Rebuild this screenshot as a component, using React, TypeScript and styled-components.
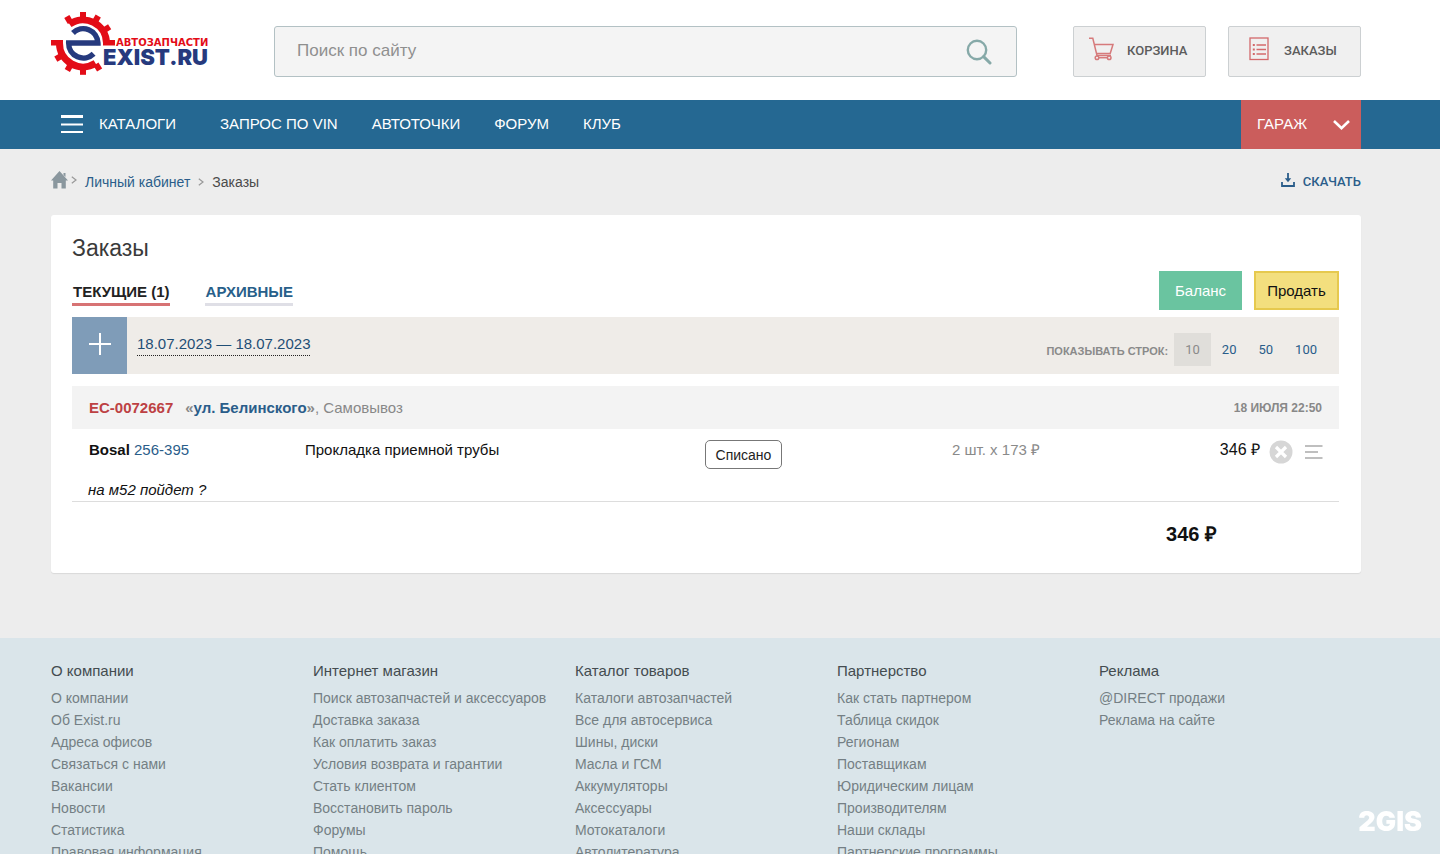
import React from "react";
import styled, { createGlobalStyle, css } from "styled-components";

const GlobalStyle = createGlobalStyle`
  *, *::before, *::after { box-sizing: border-box; }
  body {
    margin: 0;
    background: #ededed;
    color: #111;
    font-family: "Liberation Sans", Arial, sans-serif;
    font-size: 15px;
    line-height: 20px;
  }
  a { text-decoration: none; color: #2a5d8a; }
  button { font-family: inherit; cursor: pointer; }
  h1, h2, ul { margin: 0; padding: 0; font-weight: 400; }
  ul { list-style: none; }
  svg { display: block; flex: none; }
`;

const gutters = css`
  padding-left: 51px;
  padding-right: 79px;
`;

const Header = styled.header`
  ${gutters}
  display: flex;
  align-items: flex-start;
  height: 100px;
  background: #fff;
`;

const LogoLink = styled.a`
  display: block;
  width: 223px;
  padding-top: 10px;
`;

const LogoSvg = styled.svg`
  overflow: visible;
`;

const SearchForm = styled.form`
  display: flex;
  align-items: center;
  flex: 1;
  height: 51px;
  margin-top: 26px;
  margin-right: 56px;
  padding: 0 24px 0 22px;
  background: #f4f4f4;
  border: 1px solid #b3c1c4;
  border-radius: 3px;
`;

const SearchInput = styled.input`
  flex: 1;
  min-width: 0;
  height: 48px;
  padding: 0 0 2px;
  border: 0;
  outline: 0;
  background: transparent;
  font-family: inherit;
  font-size: 17px;
  color: #333;
  &::placeholder { color: #8f8f8f; opacity: 1; }
`;

const IconButton = styled.button`
  display: flex;
  padding: 0;
  border: 0;
  background: none;
`;

const HeaderLinks = styled.div`
  display: flex;
  gap: 22px;
  margin-top: 26px;
`;

const HeaderLink = styled.a<{ $inset: number; $gap: number }>`
  display: flex;
  align-items: center;
  gap: ${(p) => p.$gap}px;
  width: 133px;
  height: 51px;
  padding: 0 0 2px ${(p) => p.$inset}px;
  background: #f0f0f0;
  border: 1px solid #ccd0d2;
  border-radius: 2px;
  color: #5c5c5c;
  font-family: Roboto, sans-serif;
  font-size: 13px;
  font-weight: 500;
  svg { margin-bottom: 4px; }
`;

const Nav = styled.nav`
  ${gutters}
  display: flex;
  align-items: stretch;
  height: 49px;
  background: #256892;
  font-size: 15px;
`;

const CatalogButton = styled.button`
  display: flex;
  align-items: center;
  gap: 16px;
  margin-right: 44px;
  padding: 0 0 2px 10px;
  border: 0;
  background: none;
  color: #fff;
  font-size: 15px;
`;

const NavLinks = styled.div`
  display: flex;
  align-items: center;
  gap: 34px;
  flex: 1;
  padding-bottom: 2px;
`;

const NavLink = styled.a`
  color: #fff;
`;

const GarageButton = styled.button`
  display: flex;
  align-items: center;
  justify-content: space-between;
  width: 120px;
  padding: 0 11px 2px 16px;
  border: 0;
  background: #cb5d5c;
  color: #fff;
  font-size: 15px;
  svg { margin-top: 2px; }
`;

const Main = styled.main`
  ${gutters}
  padding-bottom: 65px;
`;

const TopRow = styled.div`
  display: flex;
  align-items: center;
  justify-content: space-between;
  height: 66px;
  font-size: 14px;
`;

const Crumbs = styled.nav`
  display: flex;
  align-items: center;
  gap: 8px;
  color: #4a4a4a;
`;

const HomeLink = styled.a`
  display: flex;
  align-items: center;
  gap: 3px;
  padding-bottom: 4px;
`;

const Download = styled.a`
  display: flex;
  align-items: center;
  gap: 8px;
  font-family: Roboto, sans-serif;
  font-size: 13px;
  font-weight: 500;
  svg { margin-bottom: 4px; }
`;

const Card = styled.section`
  padding: 20px 22px 22px 21px;
  background: #fff;
  border-radius: 3px;
  box-shadow: 0 1px 1px #d9d9d9;
`;

const Title = styled.h1`
  font-size: 23px;
  line-height: 26px;
  color: #3a3a3a;
`;

const TabRow = styled.div`
  display: flex;
  align-items: flex-end;
  justify-content: space-between;
  padding-bottom: 7px;
  margin-top: 10px;
`;

const Tabs = styled.div`
  display: flex;
  gap: 35px;
  padding-bottom: 4px;
`;

const Tab = styled.a<{ $active?: boolean }>`
  padding: 0 0 1px 1px;
  border-bottom: 3px solid ${(p) => (p.$active ? "#d77374" : "#dfdfe6")};
  color: ${(p) => (p.$active ? "#222" : "#285f8a")};
  font-size: 15px;
  font-weight: 700;
`;

const Actions = styled.div`
  display: flex;
  gap: 12px;
`;

const ActionButton = styled.button<{ $kind: "balance" | "sell" }>`
  height: 39px;
  padding: 0 10px 1px;
  border: 2px solid ${(p) => (p.$kind === "sell" ? "#e6c94e" : "#6ac4a0")};
  background: ${(p) => (p.$kind === "sell" ? "#f3df7e" : "#6ac4a0")};
  color: ${(p) => (p.$kind === "sell" ? "#111" : "#fff")};
  width: ${(p) => (p.$kind === "sell" ? 85 : 83)}px;
  font-size: 15px;
`;

const FilterBar = styled.div`
  display: flex;
  align-items: center;
  height: 57px;
  margin-bottom: 12px;
  background: #efece8;
`;

const AddButton = styled.button`
  display: flex;
  align-items: center;
  justify-content: center;
  width: 55px;
  height: 57px;
  padding: 0 0 4px;
  border: 0;
  background: #7f9cb8;
`;

const DateRange = styled.button`
  margin: 0 auto 2px 10px;
  padding: 0 0 1px;
  border: 0;
  border-bottom: 1px dotted #222;
  background: none;
  color: #1f4e75;
  font-size: 15px;
  line-height: 20px;
`;

const PageSizes = styled.div`
  display: flex;
  align-items: center;
  padding: 7px 11px 0 0;
`;

const PageSizeLabel = styled.span`
  margin-right: 6px;
  padding-top: 4px;
  color: #8a8a8a;
  font-size: 11px;
  font-weight: 700;
`;

const PageSize = styled.button<{ $active?: boolean }>`
  height: 33px;
  padding: 0 11px;
  border: 0;
  background: ${(p) => (p.$active ? "#e0deda" : "none")};
  color: ${(p) => (p.$active ? "#8a8a8a" : "#2a5d8a")};
  font-family: Roboto, sans-serif;
  font-size: 13px;
`;

const OrderTable = styled.table`
  width: 100%;
  border-collapse: collapse;
  table-layout: fixed;
`;

const Col = styled.col<{ $width?: string }>`
  width: ${(p) => p.$width ?? "auto"};
`;

const OrderHead = styled.th<{ $right?: boolean }>`
  height: 43px;
  padding: 0 17px;
  background: #f3f3f3;
  color: #888;
  font-size: ${(p) => (p.$right ? 12 : 15)}px;
  font-weight: ${(p) => (p.$right ? 700 : 400)};
  text-align: ${(p) => (p.$right ? "right" : "left")};
`;

const OrderNumber = styled.a`
  margin-right: 12px;
  color: #bd4143;
  font-weight: 700;
`;

const Bold = styled.b<{ $blue?: boolean }>`
  color: ${(p) => (p.$blue ? "#2a5d8a" : "#111")};
`;

const Cell = styled.td<{ $right?: boolean; $muted?: boolean; $inset?: boolean; $large?: boolean }>`
  height: 49px;
  padding: 11px 0 0 ${(p) => (p.$inset ? 17 : 0)}px;
  vertical-align: top;
  text-align: ${(p) => (p.$right ? "right" : "left")};
  color: ${(p) => (p.$muted ? "#8a8a8a" : "#111")};
  font-size: ${(p) => (p.$large ? 16 : 15)}px;
`;

const Status = styled.button`
  height: 29px;
  width: 77px;
  padding: 0;
  border: 1px solid #777;
  border-radius: 5px;
  background: #fff;
  color: #222;
  font-size: 14px;
`;

const RowActions = styled.div`
  display: flex;
  align-items: center;
  gap: 12px;
  padding-left: 9px;
`;

const NoteCell = styled.td`
  padding: 2px 0 1px 16px;
  border-bottom: 1px solid #ddd;
  font-style: italic;
`;

const TotalCell = styled.td`
  padding: 20px 122px 5px 0;
  font-size: 20px;
  line-height: 24px;
  font-weight: 700;
  text-align: right;
`;

const Footer = styled.footer`
  ${gutters}
  display: grid;
  grid-template-columns: repeat(5, 1fr);
  padding-top: 22px;
  padding-bottom: 22px;
  background: #dae5ea;
`;

const FooterTitle = styled.h2`
  margin-bottom: 5px;
  color: #444c50;
  font-size: 15px;
  line-height: 22px;
`;

const FooterLink = styled.a`
  display: block;
  color: #747f84;
  font-size: 14px;
  line-height: 22px;
  white-space: nowrap;
`;

const Watermark = styled.div`
  position: fixed;
  right: 18px;
  bottom: 16px;
  color: #fff;
  font-family: Inter, sans-serif;
  font-size: 27px;
  line-height: 32px;
  font-weight: 900;
`;

const teeth = [-31, 0, 29, 58, 148, 180, 210, 240];

function Logo() {
  return (
    <LogoSvg width="160" height="68" viewBox="50 10 160 68" role="img" aria-label="Exist.ru автозапчасти">
      <g fill="none" stroke="#e30c17">
        <path d="M68.500 24.200A23.500 23.500 0 0 1 105.500 43" strokeWidth="7" />
        <path d="M58.500 43A23.500 23.500 0 0 0 94.500 63.300" strokeWidth="7" />
        {teeth.map((angle) => (
          <path key={angle} d="M82 19V12" strokeWidth="6" transform={`rotate(${angle} 82 43.4)`} />
        ))}
        <path d="M102 42.800H114M50 42.800H62" strokeWidth="5.4" />
      </g>
      <path
        d="M72 33A14.600 14.600 0 0 1 96.900 42.900H67.700A14.600 14.600 0 0 0 92.600 53.700"
        fill="none"
        stroke="#263a7e"
        strokeWidth="5.500"
      />
      <text x="102" y="65" fill="#263a7e" fontFamily="Inter, sans-serif" fontWeight="900" fontSize="22">
        EXIST.RU
      </text>
      <text x="115" y="46" fill="#e30c17" fontFamily="DejaVu Sans, sans-serif" fontWeight="700" fontSize="10">
        АВТОЗАПЧАСТИ
      </text>
    </LogoSvg>
  );
}

const SearchIcon = () => (
  <svg width="26" height="26" viewBox="0 0 26 26" fill="none" stroke="#86a9a8" strokeWidth="2.4">
    <circle cx="11" cy="11" r="9.200" />
    <path d="M17.600 17.600L24 24" strokeWidth="3" strokeLinecap="round" />
  </svg>
);

const CartIcon = () => (
  <svg width="26" height="24" viewBox="0 0 26 24" fill="none" stroke="#d67a7b" strokeWidth="1.500">
    <path d="M0 1.200H3.800L8 18.500H22M5.600 7.500H24L21.200 16.500H7.600" />
    <circle cx="8" cy="20.700" r="1.800" />
    <circle cx="20.200" cy="20.700" r="1.800" />
    <path d="M9.800 20.700H18.400" />
  </svg>
);

const ListIcon = () => (
  <svg width="20" height="24" viewBox="0 0 20 24" fill="none" stroke="#d3696b" strokeWidth="1.300">
    <rect x="1" y="1" width="18" height="21.500" />
    <path d="M7.500 8H17M7.500 12.500H17M7.500 17H17" />
    <path d="M3.800 8H5.800M3.800 12.500H5.800M3.800 17H5.800" strokeWidth="2" />
  </svg>
);

const MenuIcon = () => (
  <svg width="22" height="20" viewBox="0 0 22 20" fill="#fff">
    <path d="M0 1H22V4H0zM0 9.500H22V11.500H0zM0 17H22V19H0z" />
  </svg>
);

const ChevronDown = () => (
  <svg width="17" height="10" viewBox="0 0 17 10" fill="none" stroke="#fff" strokeWidth="2.600">
    <path d="M1 1L8.500 8.200L16 1" />
  </svg>
);

const HomeIcon = () => (
  <svg width="17" height="18" viewBox="0 0 17 18" fill="#8a979e">
    <path d="M8.500 0L17 9.500H14.800V17.500H10.500V12H6.500V17.500H2.200V9.500H0zM12.500 2H14.500V6L12.500 4z" />
  </svg>
);

const ChevronRight = () => (
  <svg width="6" height="8" viewBox="0 0 6 8" fill="none" stroke="#999" strokeWidth="1.200">
    <path d="M.8.800L5 4L.8 7.200" />
  </svg>
);

const DownloadIcon = () => (
  <svg width="14" height="14" viewBox="0 0 14 14" fill="none" stroke="#2a5d8a" strokeWidth="1.800">
    <path d="M1 9V13H13V9" />
    <path d="M7 0V7" />
    <path d="M3.800 5.200H10.200L7 9.200z" fill="#2a5d8a" stroke="none" />
  </svg>
);

const PlusIcon = () => (
  <svg width="22" height="22" viewBox="0 0 22 22" stroke="#fff" strokeWidth="2">
    <path d="M11 0V22M0 11H22" />
  </svg>
);

const CancelIcon = () => (
  <svg width="24" height="24" viewBox="0 0 24 24">
    <circle cx="12" cy="12" r="11.500" fill="#d6d6d6" />
    <path d="M7 7L17 17M17 7L7 17" stroke="#fff" strokeWidth="3.200" />
  </svg>
);

const LinesIcon = () => (
  <svg width="18" height="14" viewBox="0 0 18 14" fill="none" stroke="#aaa" strokeWidth="1.600">
    <path d="M0 1H17.500M0 7H13M0 13H17.500" />
  </svg>
);

const footerColumns = [
  {
    title: "О компании",
    links: ["О компании", "Об Exist.ru", "Адреса офисов", "Связаться с нами", "Вакансии", "Новости", "Статистика", "Правовая информация"],
  },
  {
    title: "Интернет магазин",
    links: ["Поиск автозапчастей и аксессуаров", "Доставка заказа", "Как оплатить заказ", "Условия возврата и гарантии", "Стать клиентом", "Восстановить пароль", "Форумы", "Помощь"],
  },
  {
    title: "Каталог товаров",
    links: ["Каталоги автозапчастей", "Все для автосервиса", "Шины, диски", "Масла и ГСМ", "Аккумуляторы", "Аксессуары", "Мотокаталоги", "Автолитература"],
  },
  {
    title: "Партнерство",
    links: ["Как стать партнером", "Таблица скидок", "Регионам", "Поставщикам", "Юридическим лицам", "Производителям", "Наши склады", "Партнерские программы"],
  },
  { title: "Реклама", links: ["@DIRECT продажи", "Реклама на сайте"] },
];

export default function App() {
  return (
    <>
      <GlobalStyle />
      <Header>
        <LogoLink href="#">
          <Logo />
        </LogoLink>
        <SearchForm role="search">
          <SearchInput type="search" aria-label="Поиск по сайту" placeholder="Поиск по сайту" />
          <IconButton type="submit" aria-label="Найти">
            <SearchIcon />
          </IconButton>
        </SearchForm>
        <HeaderLinks>
          <HeaderLink href="#" $inset={15} $gap={12}>
            <CartIcon />
            КОРЗИНА
          </HeaderLink>
          <HeaderLink href="#" $inset={20} $gap={15}>
            <ListIcon />
            ЗАКАЗЫ
          </HeaderLink>
        </HeaderLinks>
      </Header>
      <Nav>
        <CatalogButton type="button">
          <MenuIcon />
          КАТАЛОГИ
        </CatalogButton>
        <NavLinks>
          {["ЗАПРОС ПО VIN", "АВТОТОЧКИ", "ФОРУМ", "КЛУБ"].map((label) => (
            <NavLink key={label} href="#">{label}</NavLink>
          ))}
        </NavLinks>
        <GarageButton type="button">
          ГАРАЖ
          <ChevronDown />
        </GarageButton>
      </Nav>
      <Main>
        <TopRow>
          <Crumbs aria-label="Навигация">
            <HomeLink href="#" aria-label="Главная">
              <HomeIcon />
              <ChevronRight />
            </HomeLink>
            <a href="#">Личный кабинет</a>
            <ChevronRight />
            <span>Заказы</span>
          </Crumbs>
          <Download href="#">
            <DownloadIcon />
            СКАЧАТЬ
          </Download>
        </TopRow>
        <Card>
          <Title>Заказы</Title>
          <TabRow>
            <Tabs>
              <Tab href="#" $active>ТЕКУЩИЕ (1)</Tab>
              <Tab href="#">АРХИВНЫЕ</Tab>
            </Tabs>
            <Actions>
              <ActionButton type="button" $kind="balance">Баланс</ActionButton>
              <ActionButton type="button" $kind="sell">Продать</ActionButton>
            </Actions>
          </TabRow>
          <FilterBar>
            <AddButton type="button" aria-label="Добавить">
              <PlusIcon />
            </AddButton>
            <DateRange type="button">18.07.2023 — 18.07.2023</DateRange>
            <PageSizes>
              <PageSizeLabel>ПОКАЗЫВАТЬ СТРОК:</PageSizeLabel>
              {[10, 20, 50, 100].map((size) => (
                <PageSize key={size} type="button" $active={size === 10}>{size}</PageSize>
              ))}
            </PageSizes>
          </FilterBar>
          <OrderTable>
            <colgroup>
              <Col $width="233px" />
              <Col />
              <Col $width="110px" />
              <Col $width="258px" />
              <Col $width="220px" />
              <Col $width="79px" />
            </colgroup>
            <thead>
              <tr>
                <OrderHead colSpan={4}>
                  <OrderNumber href="#">ЕС-0072667</OrderNumber>
                  <b>«</b>
                  <Bold $blue>ул. Белинского</Bold>
                  <b>»</b>, Самовывоз
                </OrderHead>
                <OrderHead colSpan={2} $right>18 ИЮЛЯ 22:50</OrderHead>
              </tr>
            </thead>
            <tbody>
              <tr>
                <Cell $inset>
                  <Bold>Bosal</Bold> <a href="#">256-395</a>
                </Cell>
                <Cell>Прокладка приемной трубы</Cell>
                <Cell $right>
                  <Status type="button">Списано</Status>
                </Cell>
                <Cell $right $muted>2 шт. x 173 ₽</Cell>
                <Cell $right $large>346 ₽</Cell>
                <Cell>
                  <RowActions>
                    <IconButton type="button" aria-label="Отказаться">
                      <CancelIcon />
                    </IconButton>
                    <IconButton type="button" aria-label="Меню">
                      <LinesIcon />
                    </IconButton>
                  </RowActions>
                </Cell>
              </tr>
              <tr>
                <NoteCell colSpan={6}>на м52 пойдет ?</NoteCell>
              </tr>
            </tbody>
            <tfoot>
              <tr>
                <TotalCell colSpan={6}>346 ₽</TotalCell>
              </tr>
            </tfoot>
          </OrderTable>
        </Card>
      </Main>
      <Footer>
        {footerColumns.map((column) => (
          <div key={column.title}>
            <FooterTitle>{column.title}</FooterTitle>
            <ul>
              {column.links.map((link) => (
                <li key={link}>
                  <FooterLink href="#">{link}</FooterLink>
                </li>
              ))}
            </ul>
          </div>
        ))}
      </Footer>
      <Watermark>2GIS</Watermark>
    </>
  );
}
